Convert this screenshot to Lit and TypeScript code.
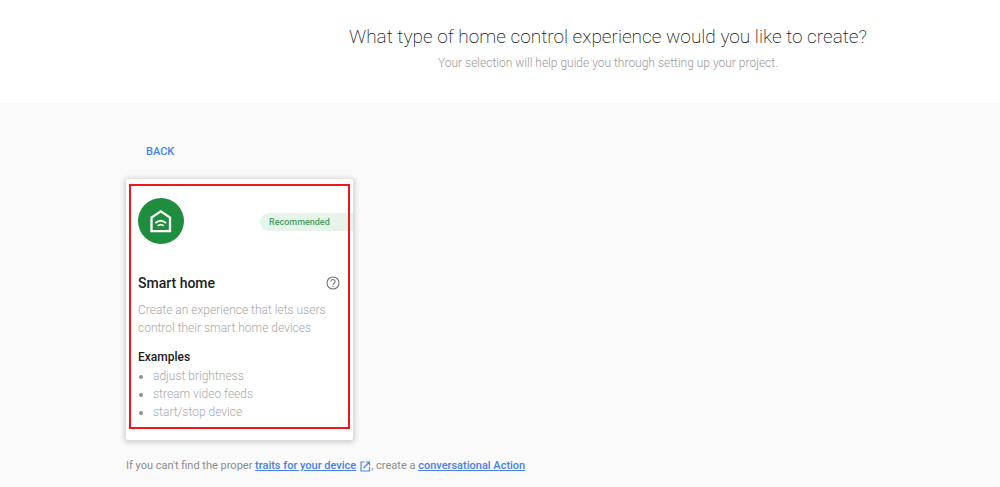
import { LitElement, html, css } from "lit";
import { customElement, property } from "lit/decorators.js";

@customElement("experience-card")
class ExperienceCard extends LitElement {
  @property() heading = "";
  @property() description = "";
  @property({ attribute: false }) examples: string[] = [];

  static styles = css`
    :host {
      display: block;
      position: relative;
      box-sizing: border-box;
      width: 227px;
      padding: 19px 0 19px 12px;
      border-radius: 2px;
      background: #fff;
      box-shadow: 0 1px 5px 2px rgba(0, 0, 0, 0.16);
    }
    .frame {
      position: absolute;
      inset: 5px 3px 11px 3px;
      border: 2px solid #f3151d;
      pointer-events: none;
    }
    .top {
      display: flex;
      align-items: center;
      justify-content: space-between;
    }
    .logo {
      display: block;
      width: 46px;
      height: 46px;
    }
    .badge {
      box-sizing: border-box;
      width: 93px;
      margin-top: 2px;
      padding-left: 9px;
      border-radius: 9px 0 0 9px;
      background: #e6f4ea;
      color: #45a05f;
      font-size: 9px;
      font-weight: 500;
      line-height: 18px;
    }
    .title {
      display: flex;
      align-items: center;
      justify-content: space-between;
      margin-top: 29px;
      padding-right: 13px;
    }
    h2 {
      margin: 0;
      color: #202124;
      font-size: 14px;
      font-weight: 500;
      line-height: 20px;
    }
    .help {
      display: flex;
      padding: 0;
      border: 0;
      background: none;
      cursor: pointer;
    }
    .text {
      margin: 8px 20px 0 0;
      color: #a8a8a8;
      font-size: 12px;
      font-weight: 300;
      line-height: 18px;
    }
    h3 {
      margin: 11px 0 0;
      color: #202124;
      font-size: 12px;
      font-weight: 500;
      line-height: 18px;
    }
    ul {
      margin: 1px 0 0;
      padding-left: 15px;
      color: #a8a8a8;
      font-size: 12px;
      font-weight: 300;
      line-height: 18px;
    }
    li::marker {
      color: #909090;
    }
  `;

  render() {
    return html`
      <div class="top">
        <svg class="logo" viewBox="0 0 46 46" aria-hidden="true">
          <circle cx="23" cy="23" r="23" fill="#1e8e3e" />
          <g fill="none" stroke="#fff">
            <path d="M13.5 33.2V19.6L22.8 13.3L32 19.6V33.2Z" stroke-width="2.3" />
            <path d="M17.3 25.2Q22.7 20.4 28.1 25.2" stroke-width="1.8" />
            <path d="M19.6 27.9Q22.7 25.3 25.8 27.9" stroke-width="1.8" />
          </g>
        </svg>
        <span class="badge">Recommended</span>
      </div>
      <div class="title">
        <h2>${this.heading}</h2>
        <button class="help" type="button" aria-label="Help">
          <svg width="14" height="14" viewBox="0 0 14 14" fill="none" stroke="#757575" stroke-width="1.1">
            <circle cx="7" cy="7" r="6" />
            <path d="M4.9 5.6a2.1 2.1 0 1 1 3.4 1.6Q7 8 7 9M7 9.9v1.2" />
          </svg>
        </button>
      </div>
      <p class="text">${this.description}</p>
      <h3>Examples</h3>
      <ul>
        ${this.examples.map((item) => html`<li>${item}</li>`)}
      </ul>
      <div class="frame"></div>
    `;
  }
}

@customElement("app-root")
class AppRoot extends LitElement {
  static styles = css`
    :host {
      display: flex;
      flex-direction: column;
      min-height: 100vh;
      background: #fafafa;
      font-family: Roboto, sans-serif;
    }
    header {
      padding: 24px 0 30px 216px;
      background: #fff;
      text-align: center;
    }
    h1 {
      margin: 0;
      color: #202124;
      font-size: 19px;
      font-weight: 200;
      line-height: 26px;
    }
    .subtitle {
      margin: 3px 0 0;
      color: #999;
      font-size: 12px;
      font-weight: 300;
      line-height: 20px;
    }
    main {
      display: flex;
      flex-direction: column;
      align-items: flex-start;
      padding: 39px 20px 10px 126px;
    }
    .back {
      margin: 0 0 17px;
      padding: 0 20px;
      border: 0;
      background: none;
      color: #4285f4;
      font-family: inherit;
      font-size: 11px;
      font-weight: 500;
      line-height: 20px;
      cursor: pointer;
    }
    .note {
      margin: 17px 0 0;
      color: #8c8c8c;
      font-size: 11px;
      font-weight: 400;
      line-height: 18px;
    }
    a {
      color: #4680ee;
      font-weight: 500;
    }
    .open {
      margin-left: 4px;
      vertical-align: -3px;
    }
  `;

  render() {
    return html`
      <header>
        <h1>What type of home control experience would you like to create?</h1>
        <p class="subtitle">Your selection will help guide you through setting up your project.</p>
      </header>
      <main>
        <button class="back" type="button">BACK</button>
        <experience-card
          heading="Smart home"
          description="Create an experience that lets users control their smart home devices"
          .examples=${["adjust brightness", "stream video feeds", "start/stop device"]}
        ></experience-card>
        <p class="note">
          If you can't find the proper <a href="#traits">traits for your device</a
          ><svg class="open" width="11" height="11" viewBox="0 0 11 11" fill="none" stroke="#4680ee" stroke-width="1.1" aria-hidden="true">
            <path d="M4.5 1H1V10H9.5V6M6 1H9.5V4.5M9.5 1L3.5 7" /></svg
          >, create a <a href="#conversational">conversational Action</a>
        </p>
      </main>
    `;
  }
}
